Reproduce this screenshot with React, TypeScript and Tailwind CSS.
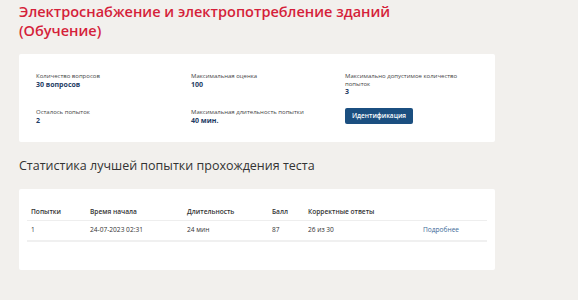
import React from 'react'

const info = [
  { label: 'Количество вопросов', value: '30 вопросов' },
  { label: 'Максимальная оценка', value: '100' },
  { label: 'Максимально допустимое количество попыток', value: '3' },
  { label: 'Осталось попыток', value: '2' },
  { label: 'Максимальная длительность попытки', value: '40 мин.' },
]

function Info({ label, value }: { label: string; value: string }) {
  return (
    <div>
      <div className="text-[6px] leading-[7.5px] text-[#444]">{label}</div>
      <div className="text-[7px] leading-[8px] font-bold text-[#1e3c64]">{value}</div>
    </div>
  )
}

export default function App() {
  return (
    <div className="w-[578px] h-[305px] bg-white font-['Open_Sans',sans-serif]">
      <div className="h-[300px] bg-[#f2f0ed] px-[19px] pt-[2px]">
        <div className="w-[476px]">
          <h1 className="text-[14.5px] leading-[19px] font-semibold text-[#d51f3a]">
            Электроснабжение и электропотребление зданий
            <br />
            (Обучение)
          </h1>

          <div className="mt-[14px] bg-white rounded-[2px] h-[88px] pl-[17px] pt-[19px]">
            <div className="grid grid-cols-[155px_154px_125px] gap-y-[12px]">
              <Info {...info[0]} />
              <Info {...info[1]} />
              <Info {...info[2]} />
              <div className="pt-[1px]">
                <Info {...info[3]} />
              </div>
              <div className="pt-[1px]">
                <Info {...info[4]} />
              </div>
              <div>
                <button className="block w-[68px] h-[16px] rounded-[2px] bg-[#1b4f80] text-white text-[6.5px] leading-[16px] font-semibold">
                  Идентификация
                </button>
              </div>
            </div>
          </div>

          <h2 className="mt-[16px] text-[12.5px] leading-[16px] text-[#333]">
            Статистика лучшей попытки прохождения теста
          </h2>

          <div className="mt-[15px] bg-white rounded-[2px] h-[81px] px-[8px] pt-[16px]">
            <table className="w-full text-[6.6px] text-[#333] border-collapse">
              <thead>
                <tr className="border-b border-[#eeeeee] h-[15px]">
                  <th className="text-left font-semibold pl-[4px] w-[63px]">Попытки</th>
                  <th className="text-left font-semibold w-[97px]">Время начала</th>
                  <th className="text-left font-semibold w-[85px]">Длительность</th>
                  <th className="text-left font-semibold w-[36px]">Балл</th>
                  <th className="text-left font-semibold w-[115px]">Корректные ответы</th>
                  <th></th>
                </tr>
              </thead>
              <tbody>
                <tr className="border-b-2 border-[#f0f0f0] h-[21px]">
                  <td className="pl-[4px]">1</td>
                  <td>24-07-2023 02:31</td>
                  <td>24 мин</td>
                  <td>87</td>
                  <td>26 из 30</td>
                  <td className="text-[#3d6a99]">Подробнее</td>
                </tr>
              </tbody>
            </table>
          </div>
        </div>
      </div>
    </div>
  )
}
